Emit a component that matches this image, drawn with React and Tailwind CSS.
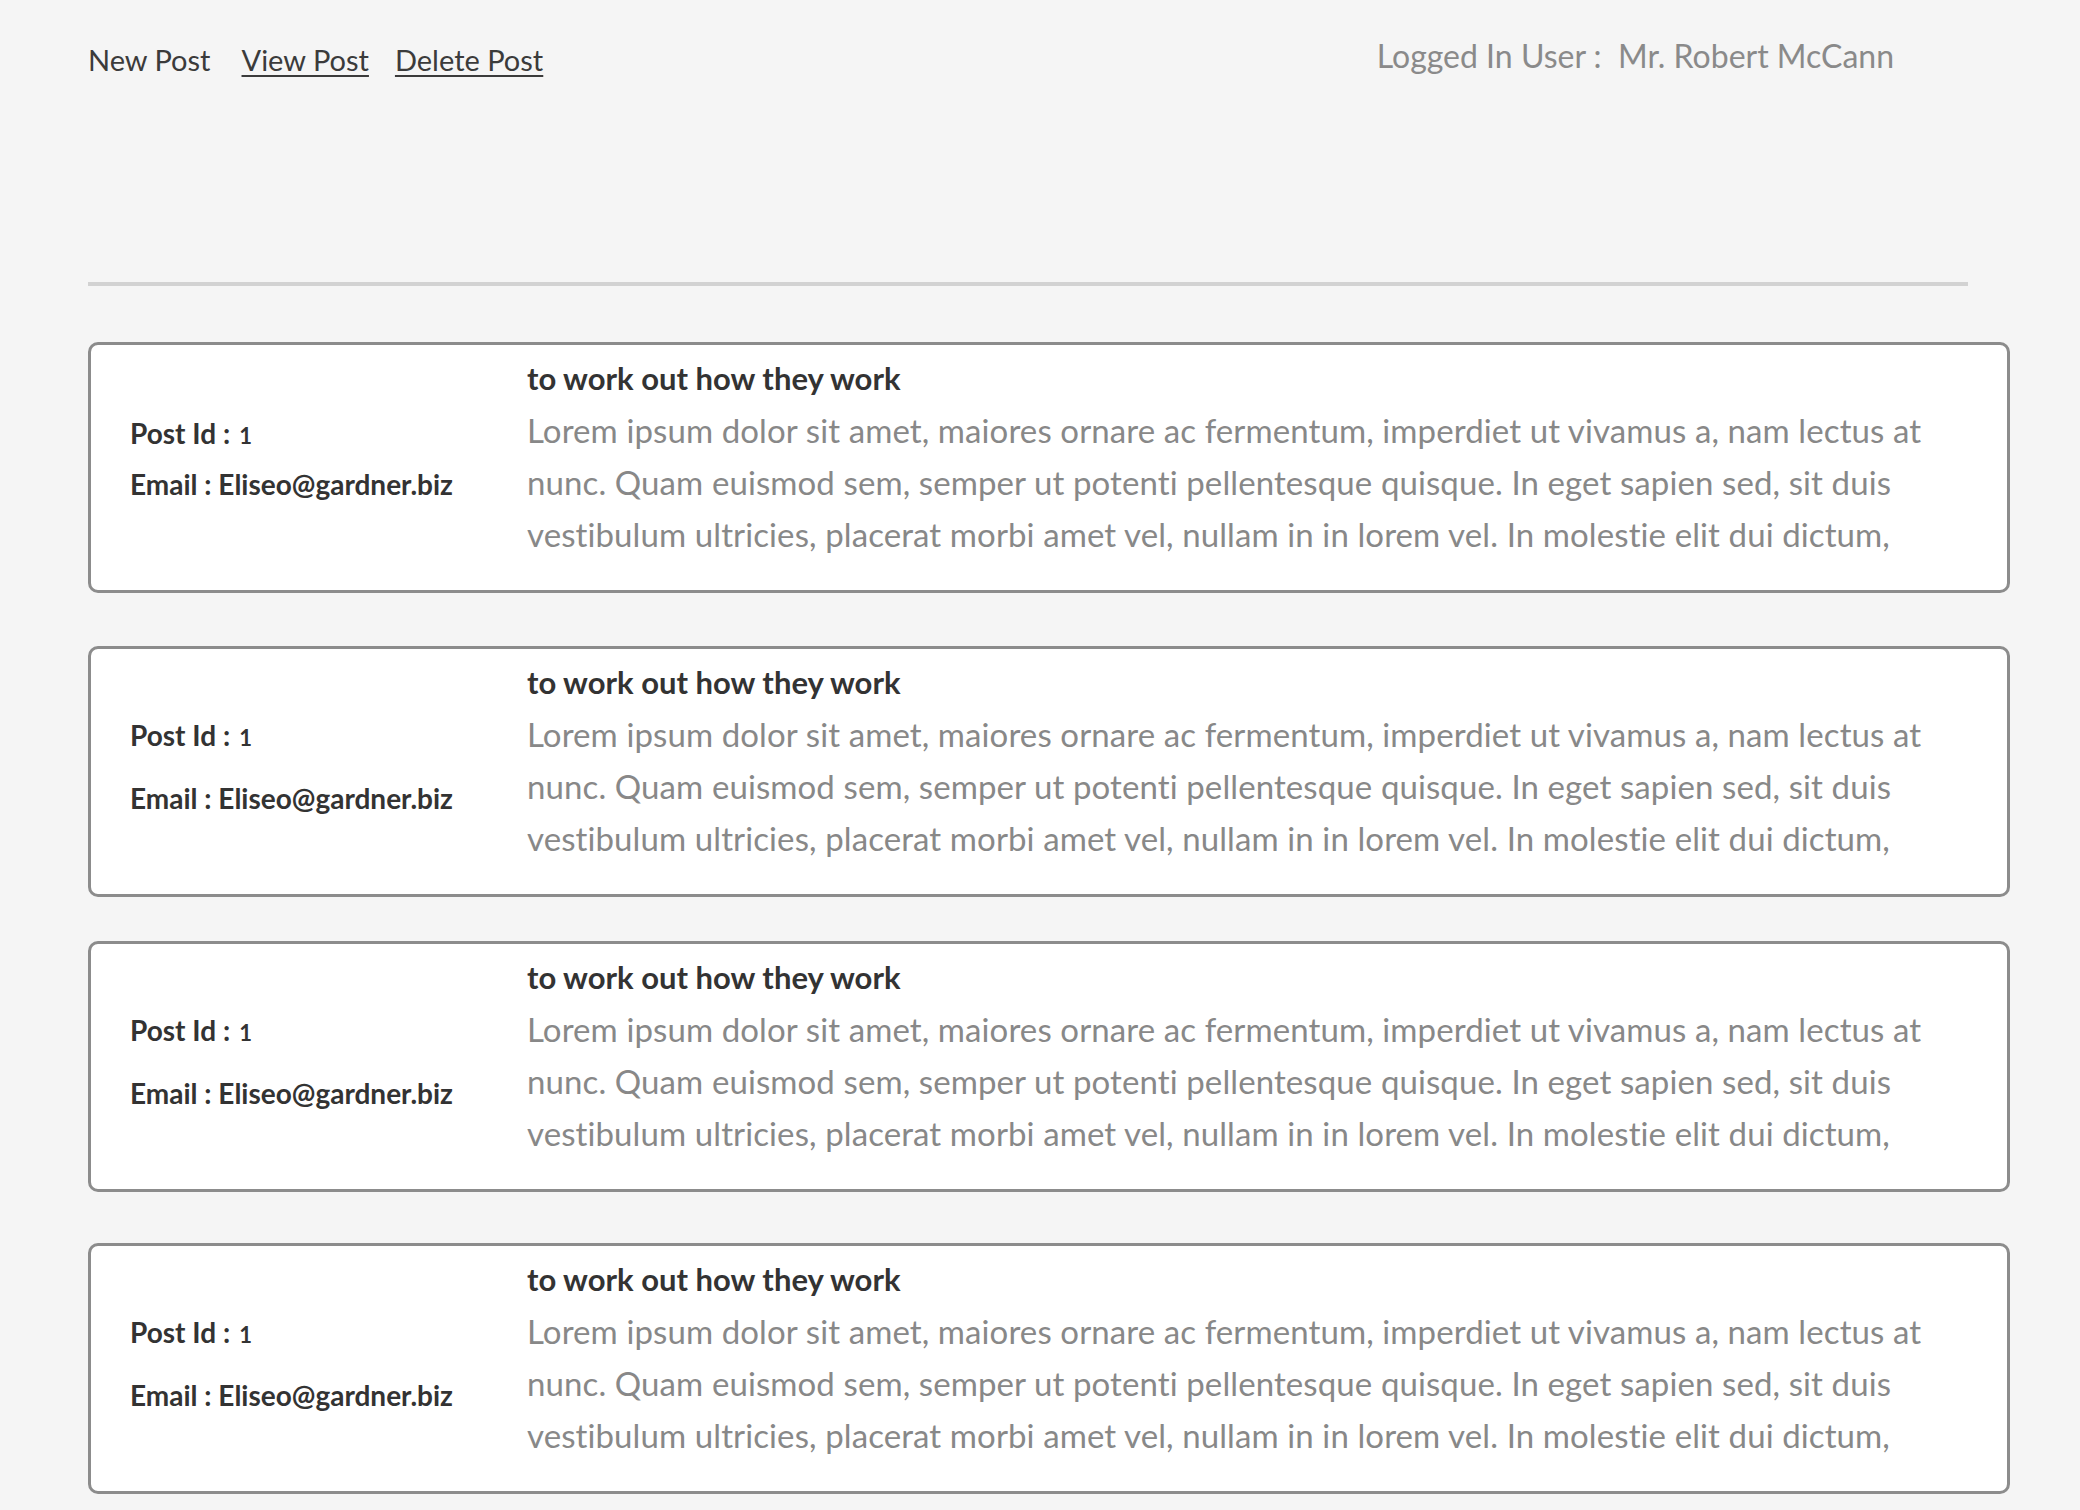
import React from "react";

const BODY =
  "Lorem ipsum dolor sit amet, maiores ornare ac fermentum, imperdiet ut vivamus a, nam lectus at nunc. Quam euismod sem, semper ut potenti pellentesque quisque. In eget sapien sed, sit duis vestibulum ultricies, placerat morbi amet vel, nullam in in lorem vel. In molestie elit dui dictum,";

const posts = [
  { key: "p1", gap: "mt-[56px]", rowGap: "mt-[16px]", top: "pt-[72px]" },
  { key: "p2", gap: "mt-[53px]", rowGap: "mt-[28px]", top: "pt-[70px]" },
  { key: "p3", gap: "mt-[44px]", rowGap: "mt-[28px]", top: "pt-[70px]" },
  { key: "p4", gap: "mt-[51px]", rowGap: "mt-[28px]", top: "pt-[70px]" },
];

function PostCard({ post }) {
  return (
    <div className={`${post.gap} flex w-[1922px] rounded-[10px] border-[3px] border-[#8c8c8c] bg-white`}>
      <div className={`w-[436px] shrink-0 pl-[39px] ${post.top} text-[28px] font-bold leading-[32px] text-[#333]`}>
        <div>
          Post Id<span className="ml-[7px]">:</span>
          <span className="ml-[9px] text-[22px]">1</span>
        </div>
        <div className={post.rowGap}>Email : Eliseo@gardner.biz</div>
      </div>
      <div className="min-w-0 flex-1 pt-[7px] pb-[30px]">
        <div className="text-[31px] font-bold leading-[52px] text-[#333]">to work out how they work</div>
        <p className="h-[156px] w-[1440px] overflow-hidden text-[33px] leading-[52px] tracking-[0.1px] text-[#888]">{BODY}</p>
      </div>
    </div>
  );
}

export default function App() {
  return (
    <div className="min-h-screen bg-[#f5f5f5] pl-[88px] pb-[20px] font-['Lato',sans-serif]">
      <div className="flex h-[84px] w-[1880px] items-start justify-between pr-[74px]">
        <nav className="flex pt-[43px] text-[29px] leading-[34px] text-[#3b3b3b]">
          <span>New Post</span>
          <a className="ml-[31px] underline underline-offset-[4px]">View Post</a>
          <a className="ml-[26px] underline underline-offset-[4px]">Delete Post</a>
        </nav>
        <div className="whitespace-pre pt-[37px] text-[32px] leading-[38px] text-[#8a8a8a]">
          {"Logged In User :  Mr. Robert McCann"}
        </div>
      </div>
      <div className="mt-[198px] h-[4px] w-[1880px] bg-[#d2d2d2]" />
      {posts.map((post) => (
        <PostCard key={post.key} post={post} />
      ))}
    </div>
  );
}
